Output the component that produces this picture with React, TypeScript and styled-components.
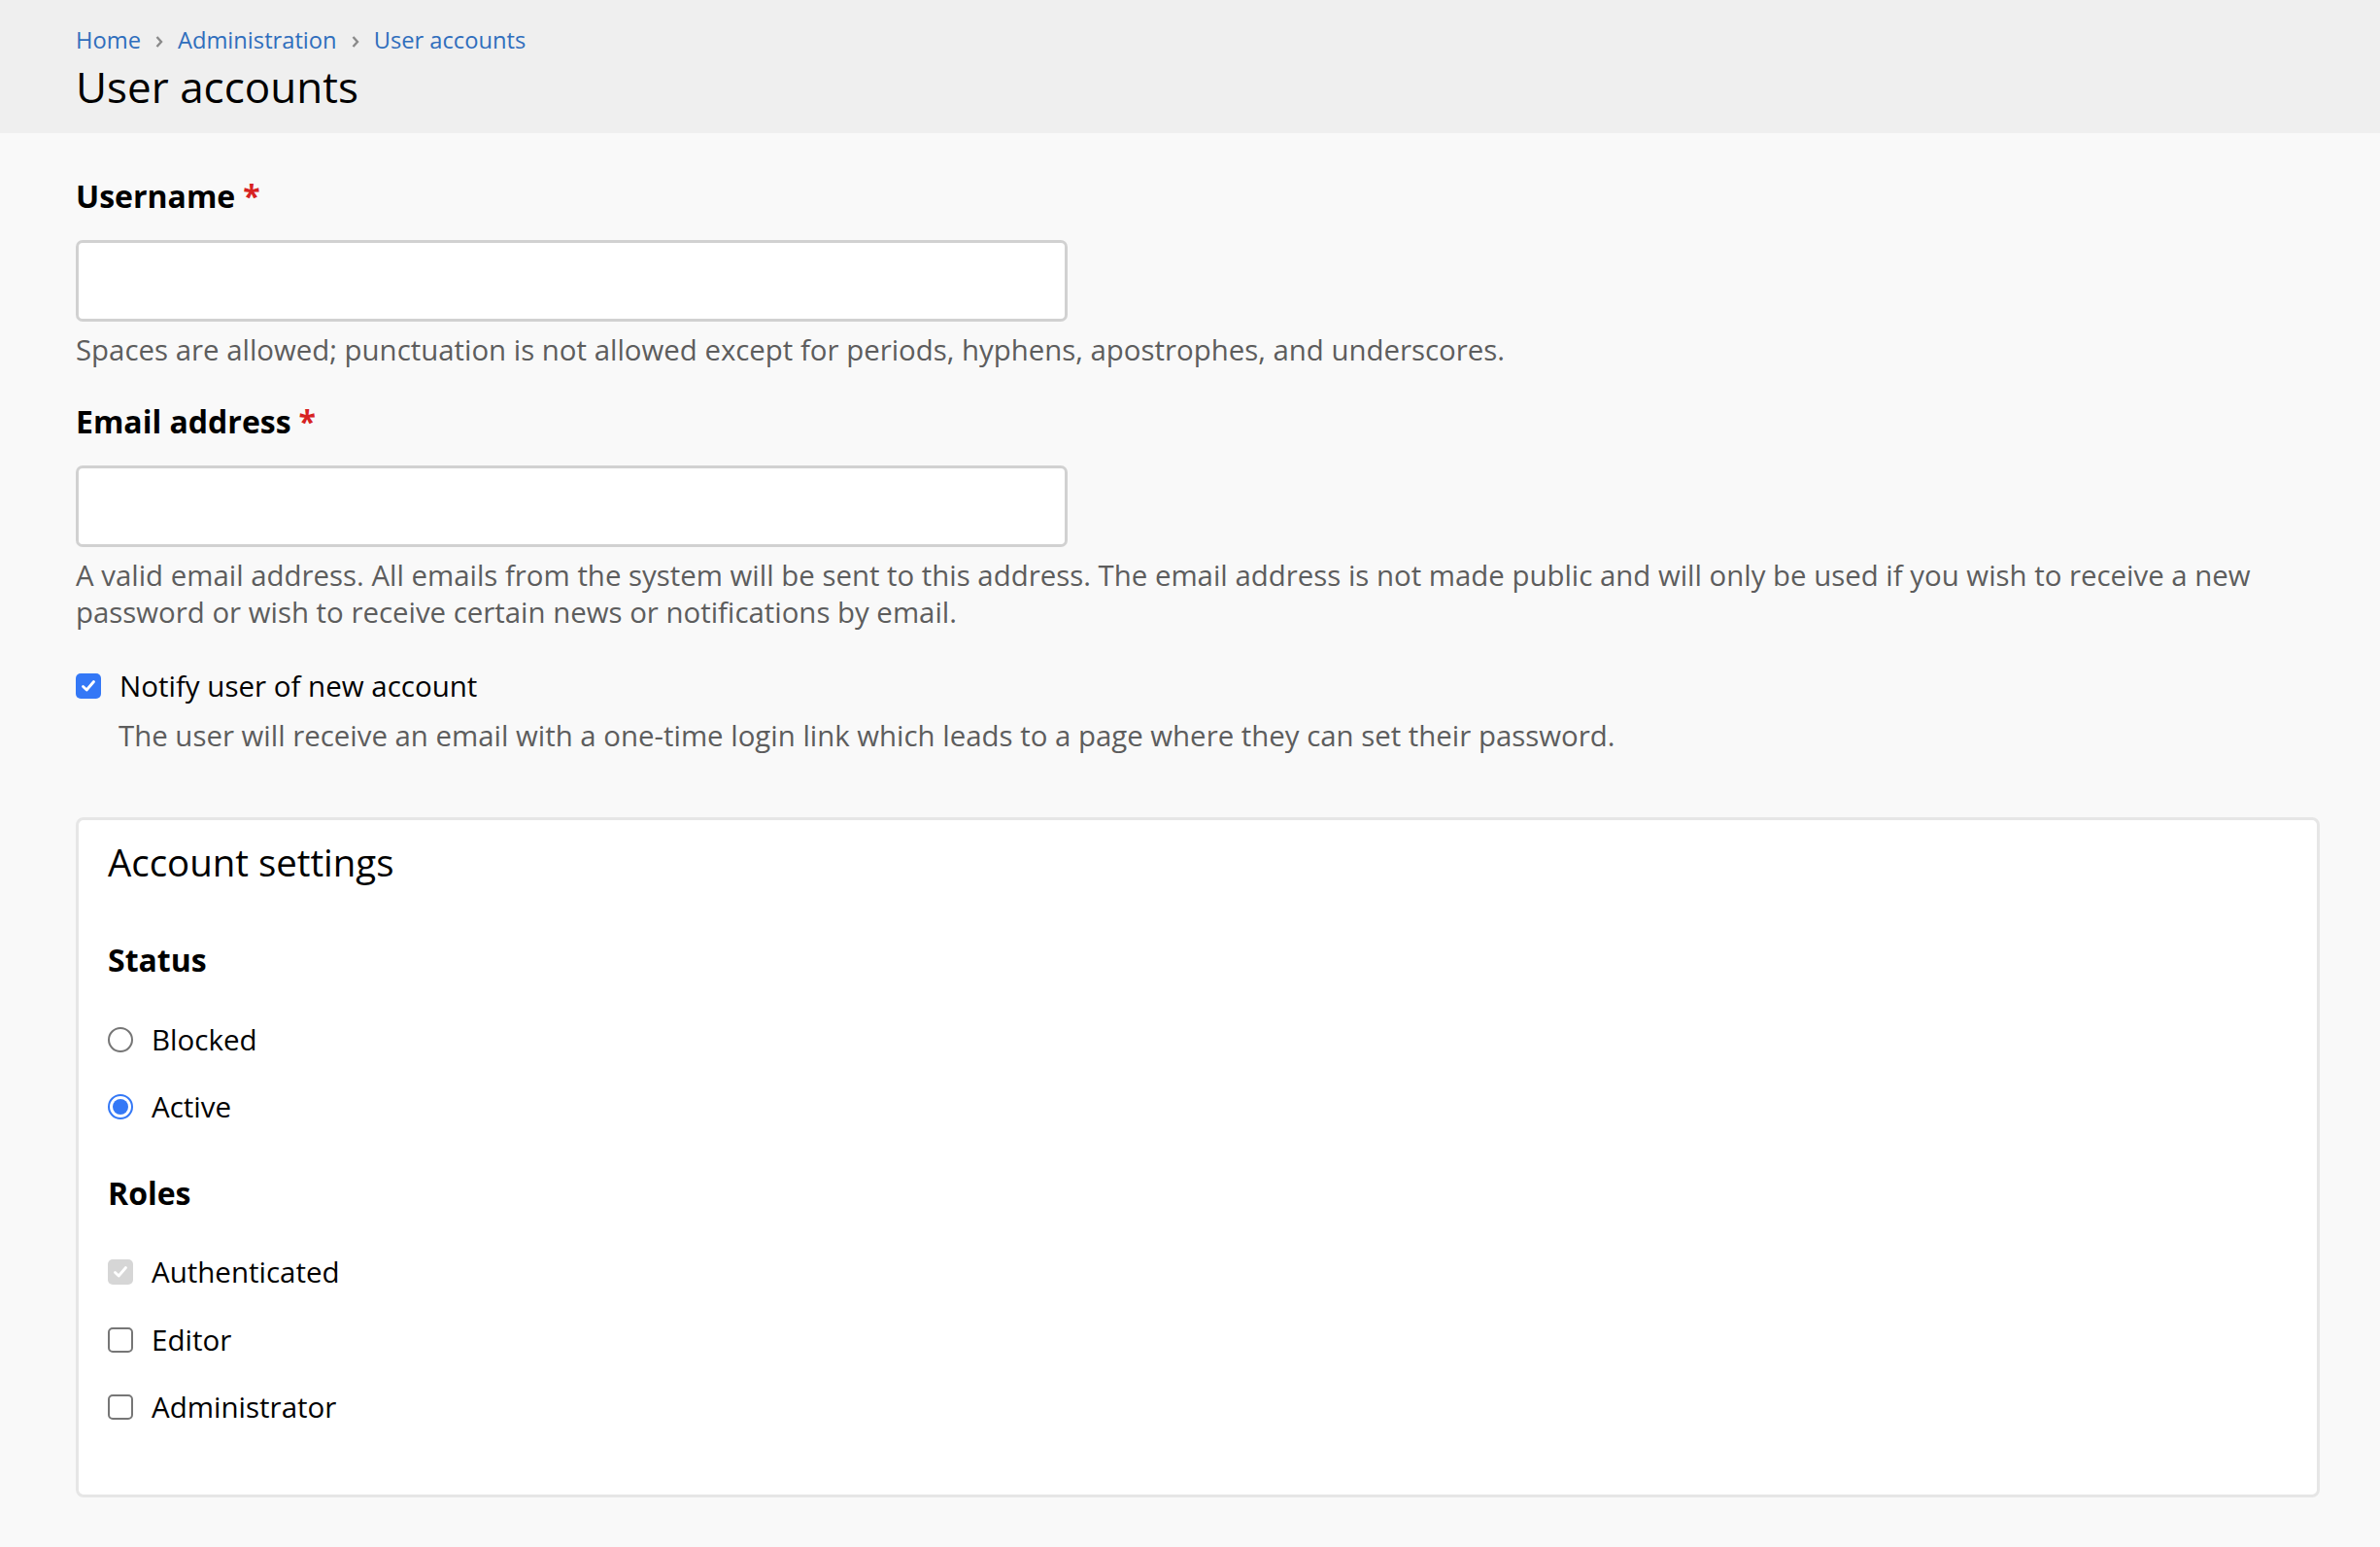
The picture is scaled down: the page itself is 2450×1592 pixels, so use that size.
import React from 'react';
import styled, { createGlobalStyle } from 'styled-components';

const GlobalStyle = createGlobalStyle`
  html, body {
    margin: 0;
    padding: 0;
    background: #f9f9f9;
  }
  body {
    font-family: 'Open Sans', 'Noto Sans', 'Liberation Sans', sans-serif;
    color: #000;
  }
`;

const Header = styled.header`
  background: #efefef;
  padding: 23px 78px 20px;
`;

const Breadcrumb = styled.nav`
  display: flex;
  align-items: center;
  font-size: 23.7px;
  line-height: 36px;
  a {
    color: #2f6ebd;
    text-decoration: none;
  }
`;

const Chevron = styled.svg`
  width: 10px;
  height: 14px;
  margin: 3px 14px 0 14px;
`;

const PageTitle = styled.h1`
  margin: 2px 0 0;
  font-size: 44px;
  line-height: 56px;
  font-weight: 400;
  color: #000;
`;

const Main = styled.main`
  padding: 43px 62px 60px 78px;
`;

const Field = styled.div<{ $gap?: number }>`
  margin-top: ${(p) => p.$gap ?? 0}px;
`;

const Label = styled.label`
  display: block;
  font-size: 32px;
  line-height: 44px;
  font-weight: 700;
  .req {
    color: #d72222;
    margin-left: 8px;
  }
`;

const TextInput = styled.input`
  display: block;
  box-sizing: border-box;
  width: 1021px;
  height: 84px;
  margin-top: 23px;
  border: 3px solid #d1d1d1;
  border-radius: 7px;
  background: #fff;
  font-size: 30px;
  padding: 0 20px;
  outline: none;
`;

const Description = styled.div<{ $indent?: number }>`
  margin-top: 10px;
  padding-left: ${(p) => p.$indent ?? 0}px;
  font-size: 29.4px;
  line-height: 38px;
  color: #5d5d5d;
`;

const OptionRow = styled.div<{ $gap?: number }>`
  display: flex;
  align-items: center;
  margin-top: ${(p) => p.$gap ?? 0}px;
  font-size: 29.5px;
  line-height: 44px;
`;

const Box = styled.span<{ $state: 'checked' | 'off' | 'disabled' }>`
  flex: none;
  box-sizing: border-box;
  width: 26px;
  height: 26px;
  margin-right: 19px;
  border-radius: 5px;
  display: flex;
  align-items: center;
  justify-content: center;
  background: ${(p) =>
    p.$state === 'checked' ? '#3478f6' : p.$state === 'disabled' ? '#d6d6d6' : '#fff'};
  border: ${(p) => (p.$state === 'off' ? '2px solid #767676' : 'none')};
  svg {
    width: 18px;
    height: 18px;
  }
`;

const Radio = styled.span<{ $on?: boolean }>`
  flex: none;
  box-sizing: border-box;
  width: 26px;
  height: 26px;
  margin-right: 19px;
  border-radius: 50%;
  border: 2px solid ${(p) => (p.$on ? '#3478f6' : '#767676')};
  background: #fff;
  display: flex;
  align-items: center;
  justify-content: center;
  &::after {
    content: '';
    display: ${(p) => (p.$on ? 'block' : 'none')};
    width: 16px;
    height: 16px;
    border-radius: 50%;
    background: #3478f6;
  }
`;

const Fieldset = styled.section`
  margin-top: 65px;
  box-sizing: border-box;
  border: 3px solid #e6e6e6;
  border-radius: 8px;
  background: #fff;
  padding: 19px 30px 68px;
`;

const Legend = styled.h2`
  margin: 0;
  font-size: 38.4px;
  line-height: 48px;
  font-weight: 400;
`;

const GroupTitle = styled.h3<{ $gap: number }>`
  margin: ${(p) => p.$gap}px 0 0;
  font-size: 32px;
  line-height: 44px;
  font-weight: 700;
`;

const Check = ({ color }: { color: string }) => (
  <svg viewBox="0 0 18 18">
    <path d="M3.5 9.5 L7.2 13 L14.5 4.5" fill="none" stroke={color} strokeWidth="2.8" strokeLinecap="round" strokeLinejoin="round" />
  </svg>
);

const Checkbox = ({ state }: { state: 'checked' | 'off' | 'disabled' }) => (
  <Box $state={state}>{state !== 'off' && <Check color="#fff" />}</Box>
);

const Sep = () => (
  <Chevron viewBox="0 0 10 14">
    <path d="M2.5 2 L7 7 L2.5 12" fill="none" stroke="#8a8a8a" strokeWidth="2.4" />
  </Chevron>
);

export default function App() {
  return (
    <>
      <GlobalStyle />
      <Header>
        <Breadcrumb>
          <a href="#">Home</a>
          <Sep />
          <a href="#">Administration</a>
          <Sep />
          <a href="#">User accounts</a>
        </Breadcrumb>
        <PageTitle>User accounts</PageTitle>
      </Header>
      <Main>
        <Field>
          <Label>
            Username<span className="req">*</span>
          </Label>
          <TextInput type="text" />
          <Description>
            Spaces are allowed; punctuation is not allowed except for periods, hyphens, apostrophes, and underscores.
          </Description>
        </Field>
        <Field $gap={33}>
          <Label>
            Email address<span className="req">*</span>
          </Label>
          <TextInput type="email" />
          <Description>
            A valid email address. All emails from the system will be sent to this address. The email address is not made public and will only be used if you wish to receive a new password or wish to receive certain news or notifications by email.
          </Description>
        </Field>
        <Field $gap={35}>
          <OptionRow>
            <Checkbox state="checked" />
            Notify user of new account
          </OptionRow>
          <Description $indent={44}>
            The user will receive an email with a one-time login link which leads to a page where they can set their password.
          </Description>
        </Field>
        <Fieldset>
          <Legend>Account settings</Legend>
          <GroupTitle $gap={55}>Status</GroupTitle>
          <OptionRow $gap={38}>
            <Radio />
            Blocked
          </OptionRow>
          <OptionRow $gap={25}>
            <Radio $on />
            Active
          </OptionRow>
          <GroupTitle $gap={45}>Roles</GroupTitle>
          <OptionRow $gap={37}>
            <Checkbox state="disabled" />
            Authenticated
          </OptionRow>
          <OptionRow $gap={26}>
            <Checkbox state="off" />
            Editor
          </OptionRow>
          <OptionRow $gap={25}>
            <Checkbox state="off" />
            Administrator
          </OptionRow>
        </Fieldset>
      </Main>
    </>
  );
}
